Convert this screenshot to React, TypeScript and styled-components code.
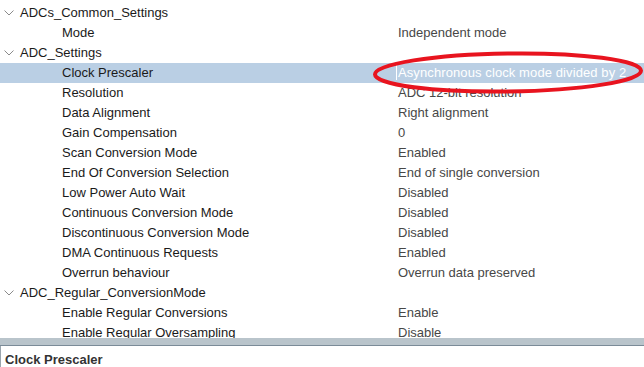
import { FC } from 'react';
import styled, { createGlobalStyle } from 'styled-components';

const GlobalStyle = createGlobalStyle`
    html, body {
        margin: 0;
        padding: 0;
        background: #ffffff;
    }
    body {
        font-family: 'Liberation Sans', Arial, sans-serif;
        font-size: 13px;
    }
`;

const Page = styled.div`
    position: relative;
    width: 644px;
    height: 367px;
    overflow: hidden;
    display: flex;
    flex-direction: column;
    background: #fff;
`;

const Tree = styled.div`
    height: 337px;
    padding-top: 3px;
    overflow: hidden;
`;

const Row = styled.div<{ $selected?: boolean }>`
    box-sizing: border-box;
    height: 20px;
    padding-top: 2px;
    display: grid;
    grid-template-columns: 397px 1fr;
    align-items: start;
    line-height: 15px;
    background: ${(p) => (p.$selected ? '#bacfe4' : 'transparent')};
    white-space: nowrap;
`;

const GroupLabel = styled.div`
    display: flex;
    align-items: center;
    gap: 6px;
    padding-left: 4px;
    color: #1a1a1a;
`;

const ItemLabel = styled.div`
    padding-left: 62px;
    color: #1a1a1a;
`;

const Value = styled.div<{ $selected?: boolean }>`
    color: ${(p) => (p.$selected ? '#ffffff' : '#474747')};
    border-left: 1px solid ${(p) => (p.$selected ? '#ffffff' : 'transparent')};
    margin-left: -1px;
    padding-left: 1px;
    letter-spacing: ${(p) => (p.$selected ? '0.1px' : '0')};
`;

const Splitter = styled.div`
    height: 7px;
    background: #b9c4cb;
    border-bottom: 1px solid #7b8b98;
`;

const Description = styled.div`
    flex: 1;
    border-left: 1px solid #9aa5ad;
    padding: 6px 0 0 4px;
    font-weight: bold;
    color: #333;
`;

const Annotation = styled.svg`
    position: absolute;
    left: 0;
    top: 0;
    pointer-events: none;
`;

const Chevron: FC = () => (
    <svg width="10" height="6" viewBox="0 0 10 6">
        <polyline points="0.5,0.5 5,5 9.5,0.5" fill="none" stroke="#8a8a8a" strokeWidth="1" />
    </svg>
);

type Item = { label: string; value: string; selected?: boolean };
type Group = { name: string; items: Item[] };

const groups: Group[] = [
    { name: 'ADCs_Common_Settings', items: [{ label: 'Mode', value: 'Independent mode' }] },
    {
        name: 'ADC_Settings',
        items: [
            { label: 'Clock Prescaler', value: 'Asynchronous clock mode divided by 2', selected: true },
            { label: 'Resolution', value: 'ADC 12-bit resolution' },
            { label: 'Data Alignment', value: 'Right alignment' },
            { label: 'Gain Compensation', value: '0' },
            { label: 'Scan Conversion Mode', value: 'Enabled' },
            { label: 'End Of Conversion Selection', value: 'End of single conversion' },
            { label: 'Low Power Auto Wait', value: 'Disabled' },
            { label: 'Continuous Conversion Mode', value: 'Disabled' },
            { label: 'Discontinuous Conversion Mode', value: 'Disabled' },
            { label: 'DMA Continuous Requests', value: 'Enabled' },
            { label: 'Overrun behaviour', value: 'Overrun data preserved' },
        ],
    },
    {
        name: 'ADC_Regular_ConversionMode',
        items: [
            { label: 'Enable Regular Conversions', value: 'Enable' },
            { label: 'Enable Regular Oversampling', value: 'Disable' },
        ],
    },
];

const App: FC = () => (
    <Page>
        <GlobalStyle />
        <Tree>
            {groups.map((g) => (
                <div key={g.name}>
                    <Row>
                        <GroupLabel>
                            <Chevron />
                            {g.name}
                        </GroupLabel>
                        <div />
                    </Row>
                    {g.items.map((it) => (
                        <Row key={it.label} $selected={it.selected}>
                            <ItemLabel>{it.label}</ItemLabel>
                            <Value $selected={it.selected}>{it.value}</Value>
                        </Row>
                    ))}
                </div>
            ))}
        </Tree>
        <Splitter />
        <Description>Clock Prescaler</Description>
        <Annotation width="644" height="367">
            <ellipse
                cx="508"
                cy="72.5"
                rx="133"
                ry="19"
                transform="rotate(-0.8 508 72.5)"
                fill="none"
                stroke="#e8141f"
                strokeWidth="4"
            />
        </Annotation>
    </Page>
);

export default App;
